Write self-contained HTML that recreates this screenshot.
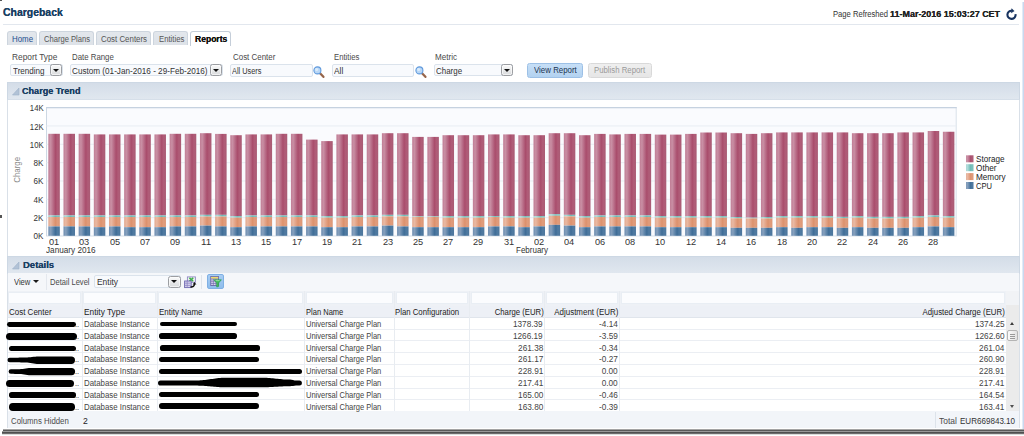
<!DOCTYPE html>
<html><head><meta charset="utf-8"><title>Chargeback</title>
<style>
html,body{margin:0;padding:0;background:#fff;}
body{width:1024px;height:436px;position:relative;overflow:hidden;font-family:"Liberation Sans",sans-serif;}
.a{position:absolute;box-sizing:border-box;}
.t{position:absolute;white-space:pre;line-height:1;font-family:"Liberation Sans",sans-serif;}
.s{position:absolute;background:#000;}
.chart{position:absolute;left:0;top:0;}
.tab{position:absolute;box-sizing:border-box;top:31.2px;height:14px;border:1px solid #cdd5de;border-bottom:none;border-radius:3px 3px 0 0;background:linear-gradient(#e3e7ec,#dde2e8);}
.inp{position:absolute;box-sizing:border-box;border:1px solid #dbe3ec;background:#f8fafd;border-radius:2px;}
.dd{position:absolute;box-sizing:border-box;border:1px solid #9c9ea2;border-radius:2.5px;background:linear-gradient(#fafafa,#d8dadc);box-shadow:inset 0 0 0 1px rgba(255,255,255,.6);}
.dd:after{content:"";position:absolute;left:50%;top:50%;margin-left:-3px;margin-top:-1.4px;border:3px solid transparent;border-top:3.2px solid #111;border-bottom:none;}
.hdr{position:absolute;box-sizing:border-box;left:7.4px;width:1012.4px;border:1px solid #cdd8e4;border-bottom-color:#d6dfe9;background:linear-gradient(#d4dde8,#e0e7ef);}
.fc{position:absolute;box-sizing:border-box;top:292px;height:12px;background:#fbfcfe;border:1px solid #e9eef4;}
.vl{position:absolute;width:1px;background:#e8ecf1;}
.hl{position:absolute;height:1px;background:#ebeef3;left:8px;width:998px;}
</style></head><body>
<!-- top-left speck -->
<div class="a" style="left:0;top:0;width:2px;height:1.4px;background:#555"></div>
<div class="a" style="left:0;top:214.5px;width:1.6px;height:3px;background:#555"></div>
<!-- right strip -->
<div class="a" style="left:1022px;top:2px;width:2px;height:427px;background:linear-gradient(90deg,#e2eaf6 0,#e2eaf6 50%,#c9d8ee 50%)"></div>
<!-- header line -->
<div class="a" style="left:3px;top:23.9px;width:1016px;height:1px;background:#e2e7ee"></div>
<!-- refresh icon -->
<svg class="a" style="left:1004px;top:7px" width="15" height="15" viewBox="0 0 15 15"><path d="M11.54 7.09 A4.1 4.1 0 1 1 7.86 3.72" fill="none" stroke="#17335f" stroke-width="2.1"/><path d="M7.7 1.7 L10.2 4 L7.2 5.8 Z" fill="#17335f" stroke="#17335f" stroke-width="0.5" stroke-linejoin="round"/></svg>
<!-- tabs -->
<div class="tab" style="left:7px;width:30px"></div>
<div class="tab" style="left:39px;width:55px"></div>
<div class="tab" style="left:96px;width:55px"></div>
<div class="tab" style="left:153px;width:35px"></div>
<div class="tab" style="left:190px;width:41.4px;background:#fff;height:15px;border-color:#c5ced9"></div>
<!-- selects / inputs -->
<div class="inp" style="left:10.4px;top:64.4px;width:52.2px;height:12px"></div>
<div class="dd" style="left:50.3px;top:64.3px;width:12.2px;height:11.4px"></div>
<div class="inp" style="left:70.4px;top:64.4px;width:152.2px;height:12px"></div>
<div class="dd" style="left:210.3px;top:64.3px;width:12.2px;height:11.4px"></div>
<div class="inp" style="left:230.4px;top:64.4px;width:82.2px;height:12.2px"></div>
<div class="inp" style="left:332px;top:64.4px;width:82px;height:12.2px"></div>
<div class="inp" style="left:433.6px;top:64.4px;width:79.6px;height:12px"></div>
<div class="dd" style="left:500.6px;top:64.3px;width:12.4px;height:11.4px"></div>
<!-- magnifiers -->
<svg class="a" style="left:313.4px;top:65.6px" width="12" height="12" viewBox="0 0 12 12"><line x1="6.8" y1="7" x2="10.4" y2="10.8" stroke="#96654a" stroke-width="2.3" stroke-linecap="round"/><circle cx="4.4" cy="4.4" r="3.5" fill="#b9d7f6" stroke="#5f99dc" stroke-width="1.1"/><circle cx="3.6" cy="3.5" r="1.5" fill="#dcecfb"/></svg>
<svg class="a" style="left:414.8px;top:65.6px" width="12" height="12" viewBox="0 0 12 12"><line x1="6.8" y1="7" x2="10.4" y2="10.8" stroke="#96654a" stroke-width="2.3" stroke-linecap="round"/><circle cx="4.4" cy="4.4" r="3.5" fill="#b9d7f6" stroke="#5f99dc" stroke-width="1.1"/><circle cx="3.6" cy="3.5" r="1.5" fill="#dcecfb"/></svg>
<!-- buttons -->
<div class="a" style="left:527.4px;top:63px;width:56px;height:15px;border:1px solid #9cc0e6;border-radius:2.5px;background:linear-gradient(#c6dff7,#b3d2f0)"></div>
<div class="a" style="left:588px;top:63px;width:64.2px;height:15px;border:1px solid #d9d9d9;border-radius:2.5px;background:linear-gradient(#efefef,#e6e6e6)"></div>
<!-- panel: Charge Trend -->
<div class="a" style="left:7.4px;top:82px;width:1012.4px;height:346.4px;border:1px solid #d9e0e8;border-top:none;background:#fff"></div>
<div class="hdr" style="top:82px;height:17.8px"></div>
<svg class="a" style="left:11.5px;top:86.5px" width="8" height="9" viewBox="0 0 8 9"><path d="M7 1 L7 8 L0.5 8 Z" fill="#b1c2d6" stroke="#9db1c9" stroke-width="0.6"/></svg>
<svg class="chart" width="1024" height="436" viewBox="0 0 1024 436">
<defs>
<linearGradient id="gs" x1="0" x2="1" y1="0" y2="0"><stop offset="0" stop-color="#c07d95"/><stop offset="0.2" stop-color="#c98fa4"/><stop offset="0.42" stop-color="#b86c87"/><stop offset="0.62" stop-color="#a94d6c"/><stop offset="0.8" stop-color="#b05c78"/><stop offset="1" stop-color="#a95b74"/></linearGradient>
<linearGradient id="gm" x1="0" x2="1" y1="0" y2="0"><stop offset="0" stop-color="#e2a88e"/><stop offset="0.2" stop-color="#e9b9a3"/><stop offset="0.42" stop-color="#e3a386"/><stop offset="0.62" stop-color="#dc916d"/><stop offset="0.8" stop-color="#e09c7c"/><stop offset="1" stop-color="#dc9776"/></linearGradient>
<linearGradient id="gc" x1="0" x2="1" y1="0" y2="0"><stop offset="0" stop-color="#6d8db0"/><stop offset="0.2" stop-color="#86a0bd"/><stop offset="0.42" stop-color="#5f85aa"/><stop offset="0.62" stop-color="#3f6d97"/><stop offset="0.8" stop-color="#4f7aa1"/><stop offset="1" stop-color="#4c769c"/></linearGradient>
<linearGradient id="go" x1="0" x2="1" y1="0" y2="0"><stop offset="0" stop-color="#9fd3d0"/><stop offset="0.2" stop-color="#b0dcda"/><stop offset="0.5" stop-color="#7cc2be"/><stop offset="0.62" stop-color="#6dbab6"/><stop offset="0.8" stop-color="#7cc2be"/><stop offset="1" stop-color="#78bdb9"/></linearGradient>
</defs>
<rect x="46.5" y="107.6" width="909.7" height="128.4" fill="#fafbfe" stroke="#d9e1ea" stroke-width="1"/>
<line x1="46.0" x2="956.7" y1="107.6" y2="107.6" stroke="#c6d2e0" stroke-width="1.3"/>
<line x1="46.5" x2="46.5" y1="107.6" y2="236.0" stroke="#cdd8e4" stroke-width="1"/>
<line x1="46.5" x2="956.2" y1="125.94" y2="125.94" stroke="#e8edf3" stroke-width="1"/>
<line x1="46.5" x2="956.2" y1="144.29" y2="144.29" stroke="#e8edf3" stroke-width="1"/>
<line x1="46.5" x2="956.2" y1="162.63" y2="162.63" stroke="#e8edf3" stroke-width="1"/>
<line x1="46.5" x2="956.2" y1="180.97" y2="180.97" stroke="#e8edf3" stroke-width="1"/>
<line x1="46.5" x2="956.2" y1="199.31" y2="199.31" stroke="#e8edf3" stroke-width="1"/>
<line x1="46.5" x2="956.2" y1="217.66" y2="217.66" stroke="#e8edf3" stroke-width="1"/>
<rect x="48.33" y="133.80" width="11.5" height="81.67" fill="url(#gs)"/>
<rect x="48.33" y="215.47" width="11.5" height="1.57" fill="url(#go)"/>
<rect x="48.33" y="217.04" width="11.5" height="9.37" fill="url(#gm)"/>
<rect x="48.33" y="226.41" width="11.5" height="9.39" fill="url(#gc)"/>
<rect x="63.49" y="133.80" width="11.5" height="81.67" fill="url(#gs)"/>
<rect x="63.49" y="215.47" width="11.5" height="1.57" fill="url(#go)"/>
<rect x="63.49" y="217.04" width="11.5" height="9.37" fill="url(#gm)"/>
<rect x="63.49" y="226.41" width="11.5" height="9.39" fill="url(#gc)"/>
<rect x="78.65" y="133.80" width="11.5" height="81.67" fill="url(#gs)"/>
<rect x="78.65" y="215.47" width="11.5" height="1.57" fill="url(#go)"/>
<rect x="78.65" y="217.04" width="11.5" height="9.37" fill="url(#gm)"/>
<rect x="78.65" y="226.41" width="11.5" height="9.39" fill="url(#gc)"/>
<rect x="93.82" y="134.40" width="11.5" height="81.07" fill="url(#gs)"/>
<rect x="93.82" y="215.47" width="11.5" height="1.57" fill="url(#go)"/>
<rect x="93.82" y="217.04" width="11.5" height="10.15" fill="url(#gm)"/>
<rect x="93.82" y="227.19" width="11.5" height="8.61" fill="url(#gc)"/>
<rect x="108.98" y="134.40" width="11.5" height="81.07" fill="url(#gs)"/>
<rect x="108.98" y="215.47" width="11.5" height="1.57" fill="url(#go)"/>
<rect x="108.98" y="217.04" width="11.5" height="9.37" fill="url(#gm)"/>
<rect x="108.98" y="226.41" width="11.5" height="9.39" fill="url(#gc)"/>
<rect x="124.14" y="134.40" width="11.5" height="81.07" fill="url(#gs)"/>
<rect x="124.14" y="215.47" width="11.5" height="1.57" fill="url(#go)"/>
<rect x="124.14" y="217.04" width="11.5" height="10.15" fill="url(#gm)"/>
<rect x="124.14" y="227.19" width="11.5" height="8.61" fill="url(#gc)"/>
<rect x="139.30" y="134.40" width="11.5" height="81.07" fill="url(#gs)"/>
<rect x="139.30" y="215.47" width="11.5" height="1.57" fill="url(#go)"/>
<rect x="139.30" y="217.04" width="11.5" height="10.15" fill="url(#gm)"/>
<rect x="139.30" y="227.19" width="11.5" height="8.61" fill="url(#gc)"/>
<rect x="154.46" y="134.40" width="11.5" height="81.07" fill="url(#gs)"/>
<rect x="154.46" y="215.47" width="11.5" height="1.57" fill="url(#go)"/>
<rect x="154.46" y="217.04" width="11.5" height="10.15" fill="url(#gm)"/>
<rect x="154.46" y="227.19" width="11.5" height="8.61" fill="url(#gc)"/>
<rect x="169.62" y="133.80" width="11.5" height="81.67" fill="url(#gs)"/>
<rect x="169.62" y="215.47" width="11.5" height="1.57" fill="url(#go)"/>
<rect x="169.62" y="217.04" width="11.5" height="9.37" fill="url(#gm)"/>
<rect x="169.62" y="226.41" width="11.5" height="9.39" fill="url(#gc)"/>
<rect x="184.79" y="133.80" width="11.5" height="81.67" fill="url(#gs)"/>
<rect x="184.79" y="215.47" width="11.5" height="1.57" fill="url(#go)"/>
<rect x="184.79" y="217.04" width="11.5" height="9.37" fill="url(#gm)"/>
<rect x="184.79" y="226.41" width="11.5" height="9.39" fill="url(#gc)"/>
<rect x="199.95" y="133.20" width="11.5" height="81.65" fill="url(#gs)"/>
<rect x="199.95" y="214.85" width="11.5" height="1.72" fill="url(#go)"/>
<rect x="199.95" y="216.57" width="11.5" height="9.06" fill="url(#gm)"/>
<rect x="199.95" y="225.63" width="11.5" height="10.17" fill="url(#gc)"/>
<rect x="215.11" y="133.90" width="11.5" height="80.95" fill="url(#gs)"/>
<rect x="215.11" y="214.85" width="11.5" height="1.72" fill="url(#go)"/>
<rect x="215.11" y="216.57" width="11.5" height="9.84" fill="url(#gm)"/>
<rect x="215.11" y="226.41" width="11.5" height="9.39" fill="url(#gc)"/>
<rect x="230.27" y="135.20" width="11.5" height="80.90" fill="url(#gs)"/>
<rect x="230.27" y="216.10" width="11.5" height="1.56" fill="url(#go)"/>
<rect x="230.27" y="217.66" width="11.5" height="9.53" fill="url(#gm)"/>
<rect x="230.27" y="227.19" width="11.5" height="8.61" fill="url(#gc)"/>
<rect x="245.43" y="134.40" width="11.5" height="81.07" fill="url(#gs)"/>
<rect x="245.43" y="215.47" width="11.5" height="1.57" fill="url(#go)"/>
<rect x="245.43" y="217.04" width="11.5" height="9.37" fill="url(#gm)"/>
<rect x="245.43" y="226.41" width="11.5" height="9.39" fill="url(#gc)"/>
<rect x="260.59" y="134.40" width="11.5" height="81.07" fill="url(#gs)"/>
<rect x="260.59" y="215.47" width="11.5" height="1.57" fill="url(#go)"/>
<rect x="260.59" y="217.04" width="11.5" height="9.37" fill="url(#gm)"/>
<rect x="260.59" y="226.41" width="11.5" height="9.39" fill="url(#gc)"/>
<rect x="275.76" y="133.80" width="11.5" height="81.67" fill="url(#gs)"/>
<rect x="275.76" y="215.47" width="11.5" height="1.57" fill="url(#go)"/>
<rect x="275.76" y="217.04" width="11.5" height="9.37" fill="url(#gm)"/>
<rect x="275.76" y="226.41" width="11.5" height="9.39" fill="url(#gc)"/>
<rect x="290.92" y="133.80" width="11.5" height="81.67" fill="url(#gs)"/>
<rect x="290.92" y="215.47" width="11.5" height="1.57" fill="url(#go)"/>
<rect x="290.92" y="217.04" width="11.5" height="9.37" fill="url(#gm)"/>
<rect x="290.92" y="226.41" width="11.5" height="9.39" fill="url(#gc)"/>
<rect x="306.08" y="139.60" width="11.5" height="75.87" fill="url(#gs)"/>
<rect x="306.08" y="215.47" width="11.5" height="1.57" fill="url(#go)"/>
<rect x="306.08" y="217.04" width="11.5" height="9.37" fill="url(#gm)"/>
<rect x="306.08" y="226.41" width="11.5" height="9.39" fill="url(#gc)"/>
<rect x="321.24" y="141.10" width="11.5" height="75.00" fill="url(#gs)"/>
<rect x="321.24" y="216.10" width="11.5" height="1.56" fill="url(#go)"/>
<rect x="321.24" y="217.66" width="11.5" height="9.53" fill="url(#gm)"/>
<rect x="321.24" y="227.19" width="11.5" height="8.61" fill="url(#gc)"/>
<rect x="336.40" y="134.40" width="11.5" height="81.70" fill="url(#gs)"/>
<rect x="336.40" y="216.10" width="11.5" height="1.56" fill="url(#go)"/>
<rect x="336.40" y="217.66" width="11.5" height="9.53" fill="url(#gm)"/>
<rect x="336.40" y="227.19" width="11.5" height="8.61" fill="url(#gc)"/>
<rect x="351.56" y="134.40" width="11.5" height="81.07" fill="url(#gs)"/>
<rect x="351.56" y="215.47" width="11.5" height="1.57" fill="url(#go)"/>
<rect x="351.56" y="217.04" width="11.5" height="9.37" fill="url(#gm)"/>
<rect x="351.56" y="226.41" width="11.5" height="9.39" fill="url(#gc)"/>
<rect x="366.73" y="134.40" width="11.5" height="81.07" fill="url(#gs)"/>
<rect x="366.73" y="215.47" width="11.5" height="1.57" fill="url(#go)"/>
<rect x="366.73" y="217.04" width="11.5" height="9.37" fill="url(#gm)"/>
<rect x="366.73" y="226.41" width="11.5" height="9.39" fill="url(#gc)"/>
<rect x="381.89" y="133.20" width="11.5" height="81.65" fill="url(#gs)"/>
<rect x="381.89" y="214.85" width="11.5" height="1.56" fill="url(#go)"/>
<rect x="381.89" y="216.41" width="11.5" height="9.22" fill="url(#gm)"/>
<rect x="381.89" y="225.63" width="11.5" height="10.17" fill="url(#gc)"/>
<rect x="397.05" y="133.20" width="11.5" height="81.65" fill="url(#gs)"/>
<rect x="397.05" y="214.85" width="11.5" height="1.56" fill="url(#go)"/>
<rect x="397.05" y="216.41" width="11.5" height="10.00" fill="url(#gm)"/>
<rect x="397.05" y="226.41" width="11.5" height="9.39" fill="url(#gc)"/>
<rect x="412.21" y="136.90" width="11.5" height="79.36" fill="url(#gs)"/>
<rect x="412.21" y="216.26" width="11.5" height="0.62" fill="url(#go)"/>
<rect x="412.21" y="216.88" width="11.5" height="10.31" fill="url(#gm)"/>
<rect x="412.21" y="227.19" width="11.5" height="8.61" fill="url(#gc)"/>
<rect x="427.37" y="136.90" width="11.5" height="79.36" fill="url(#gs)"/>
<rect x="427.37" y="216.26" width="11.5" height="0.62" fill="url(#go)"/>
<rect x="427.37" y="216.88" width="11.5" height="10.31" fill="url(#gm)"/>
<rect x="427.37" y="227.19" width="11.5" height="8.61" fill="url(#gc)"/>
<rect x="442.53" y="135.20" width="11.5" height="80.90" fill="url(#gs)"/>
<rect x="442.53" y="216.10" width="11.5" height="1.56" fill="url(#go)"/>
<rect x="442.53" y="217.66" width="11.5" height="9.53" fill="url(#gm)"/>
<rect x="442.53" y="227.19" width="11.5" height="8.61" fill="url(#gc)"/>
<rect x="457.70" y="135.20" width="11.5" height="80.90" fill="url(#gs)"/>
<rect x="457.70" y="216.10" width="11.5" height="1.56" fill="url(#go)"/>
<rect x="457.70" y="217.66" width="11.5" height="9.53" fill="url(#gm)"/>
<rect x="457.70" y="227.19" width="11.5" height="8.61" fill="url(#gc)"/>
<rect x="472.86" y="135.20" width="11.5" height="80.90" fill="url(#gs)"/>
<rect x="472.86" y="216.10" width="11.5" height="1.56" fill="url(#go)"/>
<rect x="472.86" y="217.66" width="11.5" height="9.53" fill="url(#gm)"/>
<rect x="472.86" y="227.19" width="11.5" height="8.61" fill="url(#gc)"/>
<rect x="488.02" y="134.40" width="11.5" height="81.70" fill="url(#gs)"/>
<rect x="488.02" y="216.10" width="11.5" height="0.94" fill="url(#go)"/>
<rect x="488.02" y="217.04" width="11.5" height="9.37" fill="url(#gm)"/>
<rect x="488.02" y="226.41" width="11.5" height="9.39" fill="url(#gc)"/>
<rect x="503.18" y="134.40" width="11.5" height="81.70" fill="url(#gs)"/>
<rect x="503.18" y="216.10" width="11.5" height="1.56" fill="url(#go)"/>
<rect x="503.18" y="217.66" width="11.5" height="8.75" fill="url(#gm)"/>
<rect x="503.18" y="226.41" width="11.5" height="9.39" fill="url(#gc)"/>
<rect x="518.34" y="135.20" width="11.5" height="80.90" fill="url(#gs)"/>
<rect x="518.34" y="216.10" width="11.5" height="1.56" fill="url(#go)"/>
<rect x="518.34" y="217.66" width="11.5" height="9.53" fill="url(#gm)"/>
<rect x="518.34" y="227.19" width="11.5" height="8.61" fill="url(#gc)"/>
<rect x="533.50" y="135.20" width="11.5" height="80.90" fill="url(#gs)"/>
<rect x="533.50" y="216.10" width="11.5" height="1.56" fill="url(#go)"/>
<rect x="533.50" y="217.66" width="11.5" height="8.75" fill="url(#gm)"/>
<rect x="533.50" y="226.41" width="11.5" height="9.39" fill="url(#gc)"/>
<rect x="548.67" y="133.20" width="11.5" height="81.02" fill="url(#gs)"/>
<rect x="548.67" y="214.22" width="11.5" height="1.57" fill="url(#go)"/>
<rect x="548.67" y="215.79" width="11.5" height="9.06" fill="url(#gm)"/>
<rect x="548.67" y="224.85" width="11.5" height="10.95" fill="url(#gc)"/>
<rect x="563.83" y="133.20" width="11.5" height="81.65" fill="url(#gs)"/>
<rect x="563.83" y="214.85" width="11.5" height="1.56" fill="url(#go)"/>
<rect x="563.83" y="216.41" width="11.5" height="9.22" fill="url(#gm)"/>
<rect x="563.83" y="225.63" width="11.5" height="10.17" fill="url(#gc)"/>
<rect x="578.99" y="135.20" width="11.5" height="80.90" fill="url(#gs)"/>
<rect x="578.99" y="216.10" width="11.5" height="1.56" fill="url(#go)"/>
<rect x="578.99" y="217.66" width="11.5" height="9.53" fill="url(#gm)"/>
<rect x="578.99" y="227.19" width="11.5" height="8.61" fill="url(#gc)"/>
<rect x="594.15" y="133.90" width="11.5" height="81.57" fill="url(#gs)"/>
<rect x="594.15" y="215.47" width="11.5" height="1.57" fill="url(#go)"/>
<rect x="594.15" y="217.04" width="11.5" height="9.37" fill="url(#gm)"/>
<rect x="594.15" y="226.41" width="11.5" height="9.39" fill="url(#gc)"/>
<rect x="609.31" y="134.40" width="11.5" height="81.07" fill="url(#gs)"/>
<rect x="609.31" y="215.47" width="11.5" height="1.57" fill="url(#go)"/>
<rect x="609.31" y="217.04" width="11.5" height="9.37" fill="url(#gm)"/>
<rect x="609.31" y="226.41" width="11.5" height="9.39" fill="url(#gc)"/>
<rect x="624.47" y="133.90" width="11.5" height="81.57" fill="url(#gs)"/>
<rect x="624.47" y="215.47" width="11.5" height="1.57" fill="url(#go)"/>
<rect x="624.47" y="217.04" width="11.5" height="9.37" fill="url(#gm)"/>
<rect x="624.47" y="226.41" width="11.5" height="9.39" fill="url(#gc)"/>
<rect x="639.64" y="133.90" width="11.5" height="81.57" fill="url(#gs)"/>
<rect x="639.64" y="215.47" width="11.5" height="1.57" fill="url(#go)"/>
<rect x="639.64" y="217.04" width="11.5" height="9.37" fill="url(#gm)"/>
<rect x="639.64" y="226.41" width="11.5" height="9.39" fill="url(#gc)"/>
<rect x="654.80" y="134.60" width="11.5" height="81.50" fill="url(#gs)"/>
<rect x="654.80" y="216.10" width="11.5" height="1.56" fill="url(#go)"/>
<rect x="654.80" y="217.66" width="11.5" height="9.53" fill="url(#gm)"/>
<rect x="654.80" y="227.19" width="11.5" height="8.61" fill="url(#gc)"/>
<rect x="669.96" y="134.60" width="11.5" height="81.50" fill="url(#gs)"/>
<rect x="669.96" y="216.10" width="11.5" height="1.56" fill="url(#go)"/>
<rect x="669.96" y="217.66" width="11.5" height="9.53" fill="url(#gm)"/>
<rect x="669.96" y="227.19" width="11.5" height="8.61" fill="url(#gc)"/>
<rect x="685.12" y="133.90" width="11.5" height="82.20" fill="url(#gs)"/>
<rect x="685.12" y="216.10" width="11.5" height="1.56" fill="url(#go)"/>
<rect x="685.12" y="217.66" width="11.5" height="9.53" fill="url(#gm)"/>
<rect x="685.12" y="227.19" width="11.5" height="8.61" fill="url(#gc)"/>
<rect x="700.28" y="132.50" width="11.5" height="83.60" fill="url(#gs)"/>
<rect x="700.28" y="216.10" width="11.5" height="1.56" fill="url(#go)"/>
<rect x="700.28" y="217.66" width="11.5" height="9.53" fill="url(#gm)"/>
<rect x="700.28" y="227.19" width="11.5" height="8.61" fill="url(#gc)"/>
<rect x="715.44" y="132.50" width="11.5" height="83.60" fill="url(#gs)"/>
<rect x="715.44" y="216.10" width="11.5" height="1.56" fill="url(#go)"/>
<rect x="715.44" y="217.66" width="11.5" height="9.53" fill="url(#gm)"/>
<rect x="715.44" y="227.19" width="11.5" height="8.61" fill="url(#gc)"/>
<rect x="730.61" y="133.20" width="11.5" height="83.84" fill="url(#gs)"/>
<rect x="730.61" y="217.04" width="11.5" height="1.25" fill="url(#go)"/>
<rect x="730.61" y="218.29" width="11.5" height="9.53" fill="url(#gm)"/>
<rect x="730.61" y="227.82" width="11.5" height="7.98" fill="url(#gc)"/>
<rect x="745.77" y="133.90" width="11.5" height="83.76" fill="url(#gs)"/>
<rect x="745.77" y="217.66" width="11.5" height="0.78" fill="url(#go)"/>
<rect x="745.77" y="218.44" width="11.5" height="9.38" fill="url(#gm)"/>
<rect x="745.77" y="227.82" width="11.5" height="7.98" fill="url(#gc)"/>
<rect x="760.93" y="133.20" width="11.5" height="83.84" fill="url(#gs)"/>
<rect x="760.93" y="217.04" width="11.5" height="1.40" fill="url(#go)"/>
<rect x="760.93" y="218.44" width="11.5" height="9.38" fill="url(#gm)"/>
<rect x="760.93" y="227.82" width="11.5" height="7.98" fill="url(#gc)"/>
<rect x="776.09" y="132.40" width="11.5" height="83.70" fill="url(#gs)"/>
<rect x="776.09" y="216.10" width="11.5" height="1.56" fill="url(#go)"/>
<rect x="776.09" y="217.66" width="11.5" height="9.53" fill="url(#gm)"/>
<rect x="776.09" y="227.19" width="11.5" height="8.61" fill="url(#gc)"/>
<rect x="791.25" y="132.40" width="11.5" height="83.70" fill="url(#gs)"/>
<rect x="791.25" y="216.10" width="11.5" height="1.56" fill="url(#go)"/>
<rect x="791.25" y="217.66" width="11.5" height="10.16" fill="url(#gm)"/>
<rect x="791.25" y="227.82" width="11.5" height="7.98" fill="url(#gc)"/>
<rect x="806.41" y="132.40" width="11.5" height="83.70" fill="url(#gs)"/>
<rect x="806.41" y="216.10" width="11.5" height="1.56" fill="url(#go)"/>
<rect x="806.41" y="217.66" width="11.5" height="9.53" fill="url(#gm)"/>
<rect x="806.41" y="227.19" width="11.5" height="8.61" fill="url(#gc)"/>
<rect x="821.58" y="132.40" width="11.5" height="83.70" fill="url(#gs)"/>
<rect x="821.58" y="216.10" width="11.5" height="1.56" fill="url(#go)"/>
<rect x="821.58" y="217.66" width="11.5" height="9.53" fill="url(#gm)"/>
<rect x="821.58" y="227.19" width="11.5" height="8.61" fill="url(#gc)"/>
<rect x="836.74" y="132.40" width="11.5" height="84.48" fill="url(#gs)"/>
<rect x="836.74" y="216.88" width="11.5" height="1.25" fill="url(#go)"/>
<rect x="836.74" y="218.13" width="11.5" height="9.69" fill="url(#gm)"/>
<rect x="836.74" y="227.82" width="11.5" height="7.98" fill="url(#gc)"/>
<rect x="851.90" y="133.20" width="11.5" height="82.90" fill="url(#gs)"/>
<rect x="851.90" y="216.10" width="11.5" height="1.56" fill="url(#go)"/>
<rect x="851.90" y="217.66" width="11.5" height="9.53" fill="url(#gm)"/>
<rect x="851.90" y="227.19" width="11.5" height="8.61" fill="url(#gc)"/>
<rect x="867.06" y="133.20" width="11.5" height="83.68" fill="url(#gs)"/>
<rect x="867.06" y="216.88" width="11.5" height="1.56" fill="url(#go)"/>
<rect x="867.06" y="218.44" width="11.5" height="9.38" fill="url(#gm)"/>
<rect x="867.06" y="227.82" width="11.5" height="7.98" fill="url(#gc)"/>
<rect x="882.22" y="133.20" width="11.5" height="83.68" fill="url(#gs)"/>
<rect x="882.22" y="216.88" width="11.5" height="1.56" fill="url(#go)"/>
<rect x="882.22" y="218.44" width="11.5" height="9.38" fill="url(#gm)"/>
<rect x="882.22" y="227.82" width="11.5" height="7.98" fill="url(#gc)"/>
<rect x="897.38" y="132.40" width="11.5" height="84.48" fill="url(#gs)"/>
<rect x="897.38" y="216.88" width="11.5" height="1.56" fill="url(#go)"/>
<rect x="897.38" y="218.44" width="11.5" height="9.38" fill="url(#gm)"/>
<rect x="897.38" y="227.82" width="11.5" height="7.98" fill="url(#gc)"/>
<rect x="912.55" y="132.40" width="11.5" height="83.70" fill="url(#gs)"/>
<rect x="912.55" y="216.10" width="11.5" height="1.56" fill="url(#go)"/>
<rect x="912.55" y="217.66" width="11.5" height="9.53" fill="url(#gm)"/>
<rect x="912.55" y="227.19" width="11.5" height="8.61" fill="url(#gc)"/>
<rect x="927.71" y="131.00" width="11.5" height="84.47" fill="url(#gs)"/>
<rect x="927.71" y="215.47" width="11.5" height="1.57" fill="url(#go)"/>
<rect x="927.71" y="217.04" width="11.5" height="9.37" fill="url(#gm)"/>
<rect x="927.71" y="226.41" width="11.5" height="9.39" fill="url(#gc)"/>
<rect x="942.87" y="131.75" width="11.5" height="84.35" fill="url(#gs)"/>
<rect x="942.87" y="216.10" width="11.5" height="1.56" fill="url(#go)"/>
<rect x="942.87" y="217.66" width="11.5" height="9.53" fill="url(#gm)"/>
<rect x="942.87" y="227.19" width="11.5" height="8.61" fill="url(#gc)"/>
<rect x="966.1" y="155.30" width="7.4" height="7" fill="url(#gs)"/>
<rect x="966.1" y="164.20" width="7.4" height="7" fill="url(#go)"/>
<rect x="966.1" y="173.10" width="7.4" height="7" fill="url(#gm)"/>
<rect x="966.1" y="182.00" width="7.4" height="7" fill="url(#gc)"/>
</svg>
<!-- Details -->
<div class="hdr" style="top:256.4px;height:17.6px"></div>
<svg class="a" style="left:11.5px;top:260.5px" width="8" height="9" viewBox="0 0 8 9"><path d="M7 1 L7 8 L0.5 8 Z" fill="#b1c2d6" stroke="#9db1c9" stroke-width="0.6"/></svg>
<div class="a" style="left:8.4px;top:273.4px;width:1010.4px;height:17.4px;background:#f5f7fa"></div>
<div class="vl" style="left:46px;top:274px;height:16px;background:#e4e8ee"></div>
<div class="vl" style="left:201px;top:275px;height:14px;background:#dfe4ea"></div>
<div class="a" style="left:32.9px;top:280.2px;width:0;height:0;border:3px solid transparent;border-top:3.5px solid #1a1a1a;border-bottom:none"></div>
<div class="inp" style="left:94.4px;top:275.4px;width:86.2px;height:12.2px"></div>
<div class="dd" style="left:168.2px;top:276px;width:12.5px;height:11.5px"></div>
<!-- icon 1 export -->
<svg class="a" style="left:184px;top:275.6px" width="13" height="13" viewBox="0 0 13 13"><rect x="3.4" y="0.9" width="8" height="5.4" fill="#eef3ee" stroke="#8d87c4" stroke-width="0.9"/><path d="M5.4 1.9L9.2 5.2M9.2 1.9L5.4 5.2" stroke="#3cae4a" stroke-width="1.5"/><rect x="0.6" y="5" width="6.6" height="6.6" fill="#d6d2ee" stroke="#6c66b0" stroke-width="0.9"/><path d="M0.6 7.2h6.6M0.6 9.4h6.6M3.2 5v6.6" stroke="#8680c0" stroke-width="0.7"/><path d="M6.4 10.9 Q10.3 11.2 10.5 8" fill="none" stroke="#111" stroke-width="1.4"/><path d="M8.6 8.4 L12.4 8.4 L10.5 5.9 Z" fill="#111"/></svg>
<!-- icon 2 -->
<div class="a" style="left:207.4px;top:274.4px;width:16.4px;height:14.6px;border:1px solid #7fb0e4;border-radius:2px;background:linear-gradient(#a8cdf3,#8fbdec)"></div>
<svg class="a" style="left:209.6px;top:276.2px" width="12" height="12" viewBox="0 0 12 12"><rect x="0.8" y="0.5" width="7.7" height="9.1" fill="#dcd8f0" stroke="#5f5a9c" stroke-width="0.8"/><rect x="1.2" y="0.9" width="6.9" height="1.9" fill="#ecdc6e"/><path d="M0.8 3h7.7M0.8 5.2h7.7M0.8 7.4h7.7M3.3 3v6.6M5.9 3v6.6" stroke="#6d68aa" stroke-width="0.7"/><path d="M3.9 3.8h7.5l-2.8 3.2v3.5l-1.9 0.5v-4z" fill="#43bb5e" stroke="#2c9c4a" stroke-width="0.6"/><path d="M5.6 4.6h4" stroke="#a8e8b4" stroke-width="0.8"/></svg>
<!-- table -->
<div class="a" style="left:8.4px;top:290.6px;width:1010.4px;height:15.6px;background:#eef1f6"></div>
<div class="a" style="left:8.4px;top:304.8px;width:997.4px;top:306.2px;height:11.4px;background:#edf0f6;border-bottom:1px solid #e0e5ec"></div>
<div class="fc" style="left:8px;width:73px"></div>
<div class="fc" style="left:83px;width:73.4px"></div>
<div class="fc" style="left:158px;width:145px"></div>
<div class="fc" style="left:306px;width:86.6px"></div>
<div class="fc" style="left:396px;width:72px"></div>
<div class="fc" style="left:471px;width:72px"></div>
<div class="fc" style="left:546px;width:72px"></div>
<div class="fc" style="left:621px;width:383.6px"></div>
<!-- row lines -->
<div class="hl" style="top:328.6px"></div><div class="hl" style="top:340.4px"></div><div class="hl" style="top:352.2px"></div><div class="hl" style="top:364px"></div><div class="hl" style="top:375.8px"></div><div class="hl" style="top:387.6px"></div><div class="hl" style="top:399.4px"></div>
<!-- col lines -->
<div class="vl" style="left:82px;top:291px;height:120.4px"></div>
<div class="vl" style="left:157px;top:291px;height:120.4px"></div>
<div class="vl" style="left:304.2px;top:291px;height:120.4px"></div>
<div class="vl" style="left:394.2px;top:291px;height:120.4px"></div>
<div class="vl" style="left:469.2px;top:291px;height:120.4px"></div>
<div class="vl" style="left:544.4px;top:291px;height:120.4px"></div>
<div class="vl" style="left:619.4px;top:291px;height:120.4px"></div>
<!-- scrollbar -->
<div class="a" style="left:1006.4px;top:304.8px;width:12.2px;height:106.6px;background:#ebebeb"></div>
<div class="a" style="left:1006.4px;top:291.4px;width:12.2px;height:13.4px;background:#f1f3f6"></div>
<div class="a" style="left:1009.7px;top:322.3px;width:0;height:0;border:2.9px solid transparent;border-bottom:3.3px solid #3c3c3c;border-top:none"></div>
<div class="a" style="left:1009.7px;top:404.7px;width:0;height:0;border:2.9px solid transparent;border-top:3.3px solid #505050;border-bottom:none"></div>
<div class="a" style="left:1007.4px;top:330.4px;width:10.2px;height:10.8px;border:1px solid #b4b4b4;border-radius:2px;background:linear-gradient(90deg,#fbfbfb,#e2e2e2)"></div>
<div class="a" style="left:1010.2px;top:333.6px;width:4.6px;height:1px;background:#999;box-shadow:0 2px 0 #999,0 4px 0 #999"></div>
<!-- footer -->
<div class="a" style="left:8.4px;top:411.4px;width:1010.4px;height:16.4px;background:#f2f5f9"></div>
<div class="vl" style="left:935.4px;top:412px;height:16px;background:#dde3ea"></div>
<!-- bottom shadow -->
<div class="a" style="left:3px;top:429px;width:1021px;height:1px;background:#a4a4a4"></div><div class="a" style="left:2.6px;top:430px;width:1022px;height:1px;background:#595959"></div><div class="a" style="left:2px;top:431px;width:1022px;height:1px;background:#989898"></div><div class="a" style="left:1.5px;top:432px;width:1023px;height:1px;background:#4f4f4f"></div><div class="a" style="left:1.5px;top:433px;width:1023px;height:1px;background:#6c6c6c"></div><div class="a" style="left:2px;top:434px;width:1022px;height:1px;background:#dadada"></div>
<div class="s" style="left:6.9px;width:68.8px;top:322.20px;height:4.8px;border-radius:2.4px"></div>
<div class="s" style="left:5.7px;width:71.7px;top:332.50px;height:7px;border-radius:3.5px"></div>
<div class="s" style="left:8.6px;width:67.7px;top:345.50px;height:5.2px;border-radius:2.6px"></div>
<div class="s" style="left:5.7px;width:68.3px;top:379.60px;height:7.6px;border-radius:3.8px"></div>
<div class="s" style="left:9.2px;width:67.1px;top:392.20px;height:5.6px;border-radius:2.8px"></div>
<div class="s" style="left:8.6px;width:66.5px;top:403.20px;height:7.6px;border-radius:3.8px"></div>
<div class="s" style="left:159.7px;width:77.0px;top:321.60px;height:4.6px;border-radius:2.3px"></div>
<div class="s" style="left:158.6px;width:78.1px;top:333.00px;height:5.6px;border-radius:2.8px"></div>
<div class="s" style="left:160.2px;width:100.0px;top:345.40px;height:5.2px;border-radius:2.6px"></div>
<div class="s" style="left:159px;width:100px;top:356.60px;height:5.6px;border-radius:2.8px"></div>
<div class="s" style="left:159px;width:142.60000000000002px;top:369.20px;height:5px;border-radius:2.5px"></div>
<div class="s" style="left:159.4px;width:99.20000000000002px;top:391.90px;height:5.2px;border-radius:2.6px"></div>
<div class="s" style="left:158.6px;width:100.00000000000003px;top:403.30px;height:5.8px;border-radius:2.9px"></div>
<svg class="chart" width="1024" height="436" viewBox="0 0 1024 436"><path d="M9.75 357.70 L10.50 357.69 L12.00 357.68 L13.50 357.67 L15.00 357.66 L16.50 357.64 L18.00 357.63 L19.50 357.62 L21.00 357.61 L22.50 357.60 L24.00 357.60 L25.60 357.57 L27.20 357.49 L28.80 357.35 L30.40 357.19 L32.00 357.00 L33.60 356.81 L35.20 356.65 L36.80 356.51 L38.40 356.43 L40.00 356.40 L41.52 356.40 L43.04 356.40 L44.57 356.41 L46.09 356.41 L47.61 356.42 L49.13 356.43 L50.65 356.44 L52.17 356.45 L53.70 356.47 L55.22 356.48 L56.74 356.49 L58.26 356.51 L59.78 356.52 L61.30 356.53 L62.83 356.55 L64.35 356.56 L65.87 356.57 L67.39 356.58 L68.91 356.59 L70.43 356.59 L71.30 356.60 A3.70 3.70 0 0 1 71.30 364.00 L70.43 364.00 L68.91 364.01 L67.39 364.01 L65.87 364.02 L64.35 364.02 L62.83 364.03 L61.30 364.03 L59.78 364.04 L58.26 364.05 L56.74 364.05 L55.22 364.06 L53.70 364.07 L52.17 364.07 L50.65 364.08 L49.13 364.08 L47.61 364.09 L46.09 364.09 L44.57 364.10 L43.04 364.10 L41.52 364.10 L40.00 364.10 L38.40 364.06 L36.80 363.94 L35.20 363.75 L33.60 363.51 L32.00 363.25 L30.40 362.99 L28.80 362.75 L27.20 362.56 L25.60 362.44 L24.00 362.40 L22.50 362.40 L21.00 362.38 L19.50 362.37 L18.00 362.34 L16.50 362.31 L15.00 362.29 L13.50 362.26 L12.00 362.23 L10.50 362.22 L9.75 362.20 A2.25 2.25 0 0 1 9.75 357.70 Z" fill="#000"/><path d="M10.90 369.20 L11.73 369.20 L13.30 369.20 L14.87 369.20 L16.43 369.20 L18.00 369.20 L19.56 369.16 L21.11 369.05 L22.67 368.88 L24.22 368.66 L25.78 368.44 L27.33 368.22 L28.89 368.05 L30.44 367.94 L32.00 367.90 L33.54 367.90 L35.08 367.90 L36.62 367.90 L38.16 367.90 L39.70 367.91 L41.24 367.91 L42.77 367.91 L44.31 367.92 L45.85 367.92 L47.39 367.93 L48.93 367.93 L50.47 367.94 L52.01 367.94 L53.55 367.95 L55.09 367.96 L56.63 367.96 L58.17 367.97 L59.71 367.97 L61.25 367.98 L62.79 367.98 L64.32 367.99 L65.86 367.99 L67.40 367.99 L68.94 368.00 L70.48 368.00 L71.50 368.00 A3.60 3.60 0 0 1 71.50 375.20 L70.48 375.20 L68.94 375.20 L67.40 375.21 L65.86 375.21 L64.32 375.21 L62.79 375.22 L61.25 375.22 L59.71 375.23 L58.17 375.23 L56.63 375.24 L55.09 375.24 L53.55 375.25 L52.01 375.26 L50.47 375.26 L48.93 375.27 L47.39 375.27 L45.85 375.28 L44.31 375.28 L42.77 375.29 L41.24 375.29 L39.70 375.29 L38.16 375.30 L36.62 375.30 L35.08 375.30 L33.54 375.30 L32.00 375.30 L30.44 375.26 L28.89 375.14 L27.33 374.95 L25.78 374.72 L24.22 374.48 L22.67 374.25 L21.11 374.06 L19.56 373.94 L18.00 373.90 L16.43 373.89 L14.87 373.88 L13.30 373.85 L11.73 373.82 L10.90 373.80 A2.30 2.30 0 0 1 10.90 369.20 Z" fill="#000"/><path d="M160.55 380.50 L161.04 380.50 L162.56 380.50 L164.08 380.50 L165.60 380.50 L167.12 380.50 L168.64 380.50 L170.16 380.50 L171.68 380.50 L173.20 380.50 L174.72 380.50 L176.24 380.50 L177.76 380.50 L179.28 380.50 L180.80 380.50 L182.32 380.50 L183.84 380.50 L185.36 380.50 L186.88 380.50 L188.40 380.50 L189.92 380.50 L191.44 380.50 L192.96 380.50 L194.48 380.50 L196.00 380.50 L197.50 380.48 L199.00 380.43 L200.50 380.35 L202.00 380.23 L203.50 380.09 L205.00 379.92 L206.50 379.74 L208.00 379.53 L209.50 379.32 L211.00 379.10 L212.50 378.88 L214.00 378.67 L215.50 378.46 L217.00 378.28 L218.50 378.11 L220.00 377.97 L221.50 377.85 L223.00 377.77 L224.50 377.72 L226.00 377.70 L227.50 377.70 L229.00 377.70 L230.50 377.70 L232.00 377.70 L233.50 377.70 L235.00 377.70 L236.50 377.70 L238.00 377.70 L239.50 377.70 L241.00 377.70 L242.50 377.70 L244.00 377.70 L245.50 377.70 L247.00 377.70 L248.50 377.70 L250.00 377.70 L251.50 377.70 L253.00 377.70 L254.50 377.70 L256.00 377.70 L257.50 377.70 L259.00 377.70 L260.50 377.70 L262.00 377.70 L263.56 377.71 L265.11 377.76 L266.67 377.83 L268.22 377.92 L269.78 378.04 L271.33 378.18 L272.89 378.33 L274.44 378.49 L276.00 378.65 L277.56 378.81 L279.11 378.97 L280.67 379.12 L282.22 379.26 L283.78 379.38 L285.33 379.47 L286.89 379.54 L288.44 379.59 L290.00 379.60 L291.50 379.75 L293.00 380.10 L294.50 380.45 L296.00 380.60 L297.97 380.60 L299.40 380.60 A2.50 2.50 0 0 1 299.40 385.60 L297.97 385.60 L296.00 385.60 L294.50 385.69 L293.00 385.90 L291.50 386.11 L290.00 386.20 L288.44 386.21 L286.89 386.23 L285.33 386.27 L283.78 386.33 L282.22 386.40 L280.67 386.48 L279.11 386.56 L277.56 386.65 L276.00 386.75 L274.44 386.85 L272.89 386.94 L271.33 387.03 L269.78 387.10 L268.22 387.17 L266.67 387.23 L265.11 387.27 L263.56 387.29 L262.00 387.30 L260.50 387.30 L259.00 387.30 L257.50 387.30 L256.00 387.30 L254.50 387.30 L253.00 387.30 L251.50 387.30 L250.00 387.30 L248.50 387.30 L247.00 387.30 L245.50 387.30 L244.00 387.30 L242.50 387.30 L241.00 387.30 L239.50 387.30 L238.00 387.30 L236.50 387.30 L235.00 387.30 L233.50 387.30 L232.00 387.30 L230.50 387.30 L229.00 387.30 L227.50 387.30 L226.00 387.30 L224.50 387.29 L223.00 387.26 L221.50 387.21 L220.00 387.14 L218.50 387.05 L217.00 386.95 L215.50 386.84 L214.00 386.71 L212.50 386.58 L211.00 386.45 L209.50 386.32 L208.00 386.19 L206.50 386.06 L205.00 385.95 L203.50 385.85 L202.00 385.76 L200.50 385.69 L199.00 385.64 L197.50 385.61 L196.00 385.60 L194.48 385.60 L192.96 385.60 L191.44 385.60 L189.92 385.60 L188.40 385.60 L186.88 385.60 L185.36 385.60 L183.84 385.60 L182.32 385.60 L180.80 385.60 L179.28 385.60 L177.76 385.60 L176.24 385.60 L174.72 385.60 L173.20 385.60 L171.68 385.60 L170.16 385.60 L168.64 385.60 L167.12 385.60 L165.60 385.60 L164.08 385.60 L162.56 385.60 L161.04 385.60 L160.55 385.60 A2.55 2.55 0 0 1 160.55 380.50 Z" fill="#000"/></svg>
<span class="t" style="left:2.91px;transform-origin:0 50%;top:6.87px;font-size:10.8px;color:#1b3f63;transform:scaleX(0.9672);font-weight:bold;text-shadow:0 0 0.6px currentColor">Chargeback</span>
<span class="t" style="left:832.97px;transform-origin:0 50%;top:9.04px;font-size:9.6px;color:#333;transform:scaleX(0.7940)">Page Refreshed</span>
<span class="t" style="left:889.97px;transform-origin:0 50%;top:9.04px;font-size:9.6px;color:#222;transform:scaleX(0.9338);font-weight:bold;text-shadow:0 0 0.6px currentColor">11-Mar-2016 15:03:27 CET</span>
<span class="t" style="left:11.97px;transform-origin:0 50%;top:33.94px;font-size:9.6px;color:#1f4f8f;transform:scaleX(0.8227)">Home</span>
<span class="t" style="left:44.47px;transform-origin:0 50%;top:33.94px;font-size:9.6px;color:#555;transform:scaleX(0.7921)">Charge Plans</span>
<span class="t" style="left:101.47px;transform-origin:0 50%;top:33.94px;font-size:9.6px;color:#555;transform:scaleX(0.8227)">Cost Centers</span>
<span class="t" style="left:158.97px;transform-origin:0 50%;top:33.94px;font-size:9.6px;color:#555;transform:scaleX(0.8042)">Entities</span>
<span class="t" style="left:195.22px;transform-origin:0 50%;top:33.94px;font-size:9.6px;color:#111;transform:scaleX(0.8912);font-weight:bold;text-shadow:0 0 0.6px currentColor">Reports</span>
<span class="t" style="left:11.97px;transform-origin:0 50%;top:52.24px;font-size:9.6px;color:#4a4a4a;transform:scaleX(0.8697)">Report Type</span>
<span class="t" style="left:72.47px;transform-origin:0 50%;top:52.24px;font-size:9.6px;color:#4a4a4a;transform:scaleX(0.8165)">Date Range</span>
<span class="t" style="left:232.72px;transform-origin:0 50%;top:52.24px;font-size:9.6px;color:#4a4a4a;transform:scaleX(0.8265)">Cost Center</span>
<span class="t" style="left:334.47px;transform-origin:0 50%;top:52.24px;font-size:9.6px;color:#4a4a4a;transform:scaleX(0.8042)">Entities</span>
<span class="t" style="left:435.22px;transform-origin:0 50%;top:52.24px;font-size:9.6px;color:#4a4a4a;transform:scaleX(0.8442)">Metric</span>
<span class="t" style="left:12.72px;transform-origin:0 50%;top:65.74px;font-size:9.6px;color:#333;transform:scaleX(0.8411)">Trending</span>
<span class="t" style="left:72.47px;transform-origin:0 50%;top:65.74px;font-size:9.6px;color:#333;transform:scaleX(0.8501)">Custom (01-Jan-2016 - 29-Feb-2016)</span>
<span class="t" style="left:231.97px;transform-origin:0 50%;top:65.94px;font-size:9.6px;color:#333;transform:scaleX(0.7634)">All Users</span>
<span class="t" style="left:333.72px;transform-origin:0 50%;top:65.94px;font-size:9.6px;color:#333;transform:scaleX(0.8720)">All</span>
<span class="t" style="left:436.22px;transform-origin:0 50%;top:65.74px;font-size:9.6px;color:#333;transform:scaleX(0.8280)">Charge</span>
<span class="t" style="left:533.97px;transform-origin:0 50%;top:65.34px;font-size:9.6px;color:#1b3350;transform:scaleX(0.8217)">View Report</span>
<span class="t" style="left:594.47px;transform-origin:0 50%;top:65.34px;font-size:9.6px;color:#9a9a9a;transform:scaleX(0.8112)">Publish Report</span>
<span class="t" style="left:22.38px;transform-origin:0 50%;top:86.16px;font-size:9.5px;color:#1b3f63;transform:scaleX(0.9542);font-weight:bold;text-shadow:0 0 0.6px currentColor">Charge Trend</span>
<span class="t" style="left:22.68px;transform-origin:0 50%;top:259.56px;font-size:9.5px;color:#1b3f63;transform:scaleX(0.9996);font-weight:bold;text-shadow:0 0 0.6px currentColor">Details</span>
<span class="t" style="left:14.12px;transform-origin:0 50%;top:277.04px;font-size:9.6px;color:#333;transform:scaleX(0.7906)">View</span>
<span class="t" style="left:50.22px;transform-origin:0 50%;top:277.04px;font-size:9.6px;color:#4a4a4a;transform:scaleX(0.7889)">Detail Level</span>
<span class="t" style="left:97.47px;transform-origin:0 50%;top:277.04px;font-size:9.6px;color:#333;transform:scaleX(0.8773)">Entity</span>
<span class="t" style="left:8.72px;transform-origin:0 50%;top:307.44px;font-size:9.6px;color:#222;transform:scaleX(0.8314)">Cost Center</span>
<span class="t" style="left:83.97px;transform-origin:0 50%;top:307.44px;font-size:9.6px;color:#222;transform:scaleX(0.8680)">Entity Type</span>
<span class="t" style="left:159.47px;transform-origin:0 50%;top:307.44px;font-size:9.6px;color:#222;transform:scaleX(0.8334)">Entity Name</span>
<span class="t" style="left:306.22px;transform-origin:0 50%;top:307.44px;font-size:9.6px;color:#222;transform:scaleX(0.7859)">Plan Name</span>
<span class="t" style="left:395.47px;transform-origin:0 50%;top:307.44px;font-size:9.6px;color:#222;transform:scaleX(0.8115)">Plan Configuration</span>
<span class="t" style="right:480.47px;transform-origin:100% 50%;top:307.44px;font-size:9.6px;color:#222;transform:scaleX(0.8071)">Charge (EUR)</span>
<span class="t" style="right:405.97px;transform-origin:100% 50%;top:307.44px;font-size:9.6px;color:#222;transform:scaleX(0.8285)">Adjustment (EUR)</span>
<span class="t" style="right:19.22px;transform-origin:100% 50%;top:307.44px;font-size:9.6px;color:#222;transform:scaleX(0.8167)">Adjusted Charge (EUR)</span>
<span class="t" style="left:83.97px;transform-origin:0 50%;top:319.13px;font-size:9.6px;color:#444;transform:scaleX(0.8193)">Database Instance</span>
<span class="t" style="left:306.22px;transform-origin:0 50%;top:319.13px;font-size:9.6px;color:#444;transform:scaleX(0.7846)">Universal Charge Plan</span>
<span class="t" style="right:480.97px;transform-origin:100% 50%;top:319.13px;font-size:9.6px;color:#444;transform:scaleX(0.8593)">1378.39</span>
<span class="t" style="right:406.47px;transform-origin:100% 50%;top:319.13px;font-size:9.6px;color:#444;transform:scaleX(0.8597)">-4.14</span>
<span class="t" style="right:19.72px;transform-origin:100% 50%;top:319.13px;font-size:9.6px;color:#444;transform:scaleX(0.8593)">1374.25</span>
<span class="t" style="left:75.07px;transform-origin:0 50%;top:319.13px;font-size:9.6px;color:#444;transform:scaleX(0.7590)">..</span>
<span class="t" style="left:83.97px;transform-origin:0 50%;top:330.91px;font-size:9.6px;color:#444;transform:scaleX(0.8193)">Database Instance</span>
<span class="t" style="left:306.22px;transform-origin:0 50%;top:330.91px;font-size:9.6px;color:#444;transform:scaleX(0.7846)">Universal Charge Plan</span>
<span class="t" style="right:480.97px;transform-origin:100% 50%;top:330.91px;font-size:9.6px;color:#444;transform:scaleX(0.8593)">1266.19</span>
<span class="t" style="right:406.47px;transform-origin:100% 50%;top:330.91px;font-size:9.6px;color:#444;transform:scaleX(0.8597)">-3.59</span>
<span class="t" style="right:19.72px;transform-origin:100% 50%;top:330.91px;font-size:9.6px;color:#444;transform:scaleX(0.8593)">1262.60</span>
<span class="t" style="left:75.07px;transform-origin:0 50%;top:330.91px;font-size:9.6px;color:#444;transform:scaleX(0.7590)">..</span>
<span class="t" style="left:83.97px;transform-origin:0 50%;top:342.69px;font-size:9.6px;color:#444;transform:scaleX(0.8193)">Database Instance</span>
<span class="t" style="left:306.22px;transform-origin:0 50%;top:342.69px;font-size:9.6px;color:#444;transform:scaleX(0.7846)">Universal Charge Plan</span>
<span class="t" style="right:480.97px;transform-origin:100% 50%;top:342.69px;font-size:9.6px;color:#444;transform:scaleX(0.8607)">261.38</span>
<span class="t" style="right:406.47px;transform-origin:100% 50%;top:342.69px;font-size:9.6px;color:#444;transform:scaleX(0.8597)">-0.34</span>
<span class="t" style="right:19.72px;transform-origin:100% 50%;top:342.69px;font-size:9.6px;color:#444;transform:scaleX(0.8607)">261.04</span>
<span class="t" style="left:75.07px;transform-origin:0 50%;top:342.69px;font-size:9.6px;color:#444;transform:scaleX(0.7590)">..</span>
<span class="t" style="left:83.97px;transform-origin:0 50%;top:354.47px;font-size:9.6px;color:#444;transform:scaleX(0.8193)">Database Instance</span>
<span class="t" style="left:306.22px;transform-origin:0 50%;top:354.47px;font-size:9.6px;color:#444;transform:scaleX(0.7846)">Universal Charge Plan</span>
<span class="t" style="right:480.97px;transform-origin:100% 50%;top:354.47px;font-size:9.6px;color:#444;transform:scaleX(0.8607)">261.17</span>
<span class="t" style="right:406.47px;transform-origin:100% 50%;top:354.47px;font-size:9.6px;color:#444;transform:scaleX(0.8597)">-0.27</span>
<span class="t" style="right:19.72px;transform-origin:100% 50%;top:354.47px;font-size:9.6px;color:#444;transform:scaleX(0.8607)">260.90</span>
<span class="t" style="left:75.07px;transform-origin:0 50%;top:354.47px;font-size:9.6px;color:#444;transform:scaleX(0.7590)">..</span>
<span class="t" style="left:83.97px;transform-origin:0 50%;top:366.25px;font-size:9.6px;color:#444;transform:scaleX(0.8193)">Database Instance</span>
<span class="t" style="left:306.22px;transform-origin:0 50%;top:366.25px;font-size:9.6px;color:#444;transform:scaleX(0.7846)">Universal Charge Plan</span>
<span class="t" style="right:480.97px;transform-origin:100% 50%;top:366.25px;font-size:9.6px;color:#444;transform:scaleX(0.8607)">228.91</span>
<span class="t" style="right:406.47px;transform-origin:100% 50%;top:366.25px;font-size:9.6px;color:#444;transform:scaleX(0.8592)">0.00</span>
<span class="t" style="right:19.72px;transform-origin:100% 50%;top:366.25px;font-size:9.6px;color:#444;transform:scaleX(0.8607)">228.91</span>
<span class="t" style="left:75.07px;transform-origin:0 50%;top:366.25px;font-size:9.6px;color:#444;transform:scaleX(0.7590)">..</span>
<span class="t" style="left:83.97px;transform-origin:0 50%;top:378.03px;font-size:9.6px;color:#444;transform:scaleX(0.8193)">Database Instance</span>
<span class="t" style="left:306.22px;transform-origin:0 50%;top:378.03px;font-size:9.6px;color:#444;transform:scaleX(0.7846)">Universal Charge Plan</span>
<span class="t" style="right:480.97px;transform-origin:100% 50%;top:378.03px;font-size:9.6px;color:#444;transform:scaleX(0.8607)">217.41</span>
<span class="t" style="right:406.47px;transform-origin:100% 50%;top:378.03px;font-size:9.6px;color:#444;transform:scaleX(0.8592)">0.00</span>
<span class="t" style="right:19.72px;transform-origin:100% 50%;top:378.03px;font-size:9.6px;color:#444;transform:scaleX(0.8607)">217.41</span>
<span class="t" style="left:75.07px;transform-origin:0 50%;top:378.03px;font-size:9.6px;color:#444;transform:scaleX(0.7590)">..</span>
<span class="t" style="left:83.97px;transform-origin:0 50%;top:389.81px;font-size:9.6px;color:#444;transform:scaleX(0.8193)">Database Instance</span>
<span class="t" style="left:306.22px;transform-origin:0 50%;top:389.81px;font-size:9.6px;color:#444;transform:scaleX(0.7846)">Universal Charge Plan</span>
<span class="t" style="right:480.97px;transform-origin:100% 50%;top:389.81px;font-size:9.6px;color:#444;transform:scaleX(0.8607)">165.00</span>
<span class="t" style="right:406.47px;transform-origin:100% 50%;top:389.81px;font-size:9.6px;color:#444;transform:scaleX(0.8597)">-0.46</span>
<span class="t" style="right:19.72px;transform-origin:100% 50%;top:389.81px;font-size:9.6px;color:#444;transform:scaleX(0.8607)">164.54</span>
<span class="t" style="left:75.07px;transform-origin:0 50%;top:389.81px;font-size:9.6px;color:#444;transform:scaleX(0.7590)">..</span>
<span class="t" style="left:83.97px;transform-origin:0 50%;top:401.59px;font-size:9.6px;color:#444;transform:scaleX(0.8193)">Database Instance</span>
<span class="t" style="left:306.22px;transform-origin:0 50%;top:401.59px;font-size:9.6px;color:#444;transform:scaleX(0.7846)">Universal Charge Plan</span>
<span class="t" style="right:480.97px;transform-origin:100% 50%;top:401.59px;font-size:9.6px;color:#444;transform:scaleX(0.8607)">163.80</span>
<span class="t" style="right:406.47px;transform-origin:100% 50%;top:401.59px;font-size:9.6px;color:#444;transform:scaleX(0.8597)">-0.39</span>
<span class="t" style="right:19.72px;transform-origin:100% 50%;top:401.59px;font-size:9.6px;color:#444;transform:scaleX(0.8607)">163.41</span>
<span class="t" style="left:75.07px;transform-origin:0 50%;top:401.59px;font-size:9.6px;color:#444;transform:scaleX(0.7590)">..</span>
<span class="t" style="left:10.72px;transform-origin:0 50%;top:416.24px;font-size:9.6px;color:#4a4a4a;transform:scaleX(0.8149)">Columns Hidden</span>
<span class="t" style="left:82.72px;transform-origin:0 50%;top:416.24px;font-size:9.6px;color:#222;transform:scaleX(0.8994)">2</span>
<span class="t" style="left:938.72px;transform-origin:0 50%;top:416.24px;font-size:9.6px;color:#4a4a4a;transform:scaleX(0.8786)">Total</span>
<span class="t" style="left:960.47px;transform-origin:0 50%;top:416.24px;font-size:9.6px;color:#333;transform:scaleX(0.8391)">EUR669843.10</span>
<span class="t" style="right:980.48px;transform-origin:100% 50%;top:103.34px;font-size:9.4px;color:#333;transform:scaleX(0.8290)">14K</span>
<span class="t" style="right:980.48px;transform-origin:100% 50%;top:121.61px;font-size:9.4px;color:#333;transform:scaleX(0.8290)">12K</span>
<span class="t" style="right:980.48px;transform-origin:100% 50%;top:139.88px;font-size:9.4px;color:#333;transform:scaleX(0.8290)">10K</span>
<span class="t" style="right:980.48px;transform-origin:100% 50%;top:158.15px;font-size:9.4px;color:#333;transform:scaleX(0.8662)">8K</span>
<span class="t" style="right:980.48px;transform-origin:100% 50%;top:176.42px;font-size:9.4px;color:#333;transform:scaleX(0.8662)">6K</span>
<span class="t" style="right:980.48px;transform-origin:100% 50%;top:194.69px;font-size:9.4px;color:#333;transform:scaleX(0.8662)">4K</span>
<span class="t" style="right:980.48px;transform-origin:100% 50%;top:212.96px;font-size:9.4px;color:#333;transform:scaleX(0.8662)">2K</span>
<span class="t" style="right:980.48px;transform-origin:100% 50%;top:231.23px;font-size:9.4px;color:#333;transform:scaleX(0.8662)">0K</span>
<span class="t" style="left:48.96px;transform-origin:0 50%;top:237.34px;font-size:9.4px;color:#333;transform:scaleX(0.9805)">01</span>
<span class="t" style="left:79.29px;transform-origin:0 50%;top:237.34px;font-size:9.4px;color:#333;transform:scaleX(0.9805)">03</span>
<span class="t" style="left:109.61px;transform-origin:0 50%;top:237.34px;font-size:9.4px;color:#333;transform:scaleX(0.9805)">05</span>
<span class="t" style="left:139.93px;transform-origin:0 50%;top:237.34px;font-size:9.4px;color:#333;transform:scaleX(0.9805)">07</span>
<span class="t" style="left:170.26px;transform-origin:0 50%;top:237.34px;font-size:9.4px;color:#333;transform:scaleX(0.9805)">09</span>
<span class="t" style="left:200.58px;transform-origin:0 50%;top:237.34px;font-size:9.4px;color:#333;transform:scaleX(1.0513)">11</span>
<span class="t" style="left:230.90px;transform-origin:0 50%;top:237.34px;font-size:9.4px;color:#333;transform:scaleX(0.9805)">13</span>
<span class="t" style="left:261.23px;transform-origin:0 50%;top:237.34px;font-size:9.4px;color:#333;transform:scaleX(0.9805)">15</span>
<span class="t" style="left:291.55px;transform-origin:0 50%;top:237.34px;font-size:9.4px;color:#333;transform:scaleX(0.9805)">17</span>
<span class="t" style="left:321.87px;transform-origin:0 50%;top:237.34px;font-size:9.4px;color:#333;transform:scaleX(0.9805)">19</span>
<span class="t" style="left:352.20px;transform-origin:0 50%;top:237.34px;font-size:9.4px;color:#333;transform:scaleX(0.9805)">21</span>
<span class="t" style="left:382.52px;transform-origin:0 50%;top:237.34px;font-size:9.4px;color:#333;transform:scaleX(0.9805)">23</span>
<span class="t" style="left:412.84px;transform-origin:0 50%;top:237.34px;font-size:9.4px;color:#333;transform:scaleX(0.9805)">25</span>
<span class="t" style="left:443.17px;transform-origin:0 50%;top:237.34px;font-size:9.4px;color:#333;transform:scaleX(0.9805)">27</span>
<span class="t" style="left:473.49px;transform-origin:0 50%;top:237.34px;font-size:9.4px;color:#333;transform:scaleX(0.9805)">29</span>
<span class="t" style="left:503.81px;transform-origin:0 50%;top:237.34px;font-size:9.4px;color:#333;transform:scaleX(0.9805)">31</span>
<span class="t" style="left:534.14px;transform-origin:0 50%;top:237.34px;font-size:9.4px;color:#333;transform:scaleX(0.9805)">02</span>
<span class="t" style="left:564.46px;transform-origin:0 50%;top:237.34px;font-size:9.4px;color:#333;transform:scaleX(0.9805)">04</span>
<span class="t" style="left:594.78px;transform-origin:0 50%;top:237.34px;font-size:9.4px;color:#333;transform:scaleX(0.9805)">06</span>
<span class="t" style="left:625.11px;transform-origin:0 50%;top:237.34px;font-size:9.4px;color:#333;transform:scaleX(0.9805)">08</span>
<span class="t" style="left:655.43px;transform-origin:0 50%;top:237.34px;font-size:9.4px;color:#333;transform:scaleX(0.9805)">10</span>
<span class="t" style="left:685.75px;transform-origin:0 50%;top:237.34px;font-size:9.4px;color:#333;transform:scaleX(0.9805)">12</span>
<span class="t" style="left:716.08px;transform-origin:0 50%;top:237.34px;font-size:9.4px;color:#333;transform:scaleX(0.9805)">14</span>
<span class="t" style="left:746.40px;transform-origin:0 50%;top:237.34px;font-size:9.4px;color:#333;transform:scaleX(0.9805)">16</span>
<span class="t" style="left:776.72px;transform-origin:0 50%;top:237.34px;font-size:9.4px;color:#333;transform:scaleX(0.9805)">18</span>
<span class="t" style="left:807.05px;transform-origin:0 50%;top:237.34px;font-size:9.4px;color:#333;transform:scaleX(0.9805)">20</span>
<span class="t" style="left:837.37px;transform-origin:0 50%;top:237.34px;font-size:9.4px;color:#333;transform:scaleX(0.9805)">22</span>
<span class="t" style="left:867.69px;transform-origin:0 50%;top:237.34px;font-size:9.4px;color:#333;transform:scaleX(0.9805)">24</span>
<span class="t" style="left:898.02px;transform-origin:0 50%;top:237.34px;font-size:9.4px;color:#333;transform:scaleX(0.9805)">26</span>
<span class="t" style="left:928.34px;transform-origin:0 50%;top:237.34px;font-size:9.4px;color:#333;transform:scaleX(0.9805)">28</span>
<span class="t" style="left:45.88px;transform-origin:0 50%;top:244.74px;font-size:9.4px;color:#333;transform:scaleX(0.8734)">January 2016</span>
<span class="t" style="left:515.99px;transform-origin:0 50%;top:244.74px;font-size:9.4px;color:#333;transform:scaleX(0.8539)">February</span>
<span class="t" style="left:975.78px;transform-origin:0 50%;top:153.84px;font-size:9.4px;color:#222;transform:scaleX(0.8657)">Storage</span>
<span class="t" style="left:975.78px;transform-origin:0 50%;top:162.89px;font-size:9.4px;color:#222;transform:scaleX(0.8755)">Other</span>
<span class="t" style="left:975.78px;transform-origin:0 50%;top:171.94px;font-size:9.4px;color:#222;transform:scaleX(0.8723)">Memory</span>
<span class="t" style="left:975.78px;transform-origin:0 50%;top:180.99px;font-size:9.4px;color:#222;transform:scaleX(0.8099)">CPU</span>
<span class="t" style="left:12.2px;top:152.4px;font-size:9.4px;color:#8a8a8a;transform-origin:0 0;transform:rotate(-90deg) translate(-100%,0) scaleX(0.84)">Charge</span>
</body></html>
